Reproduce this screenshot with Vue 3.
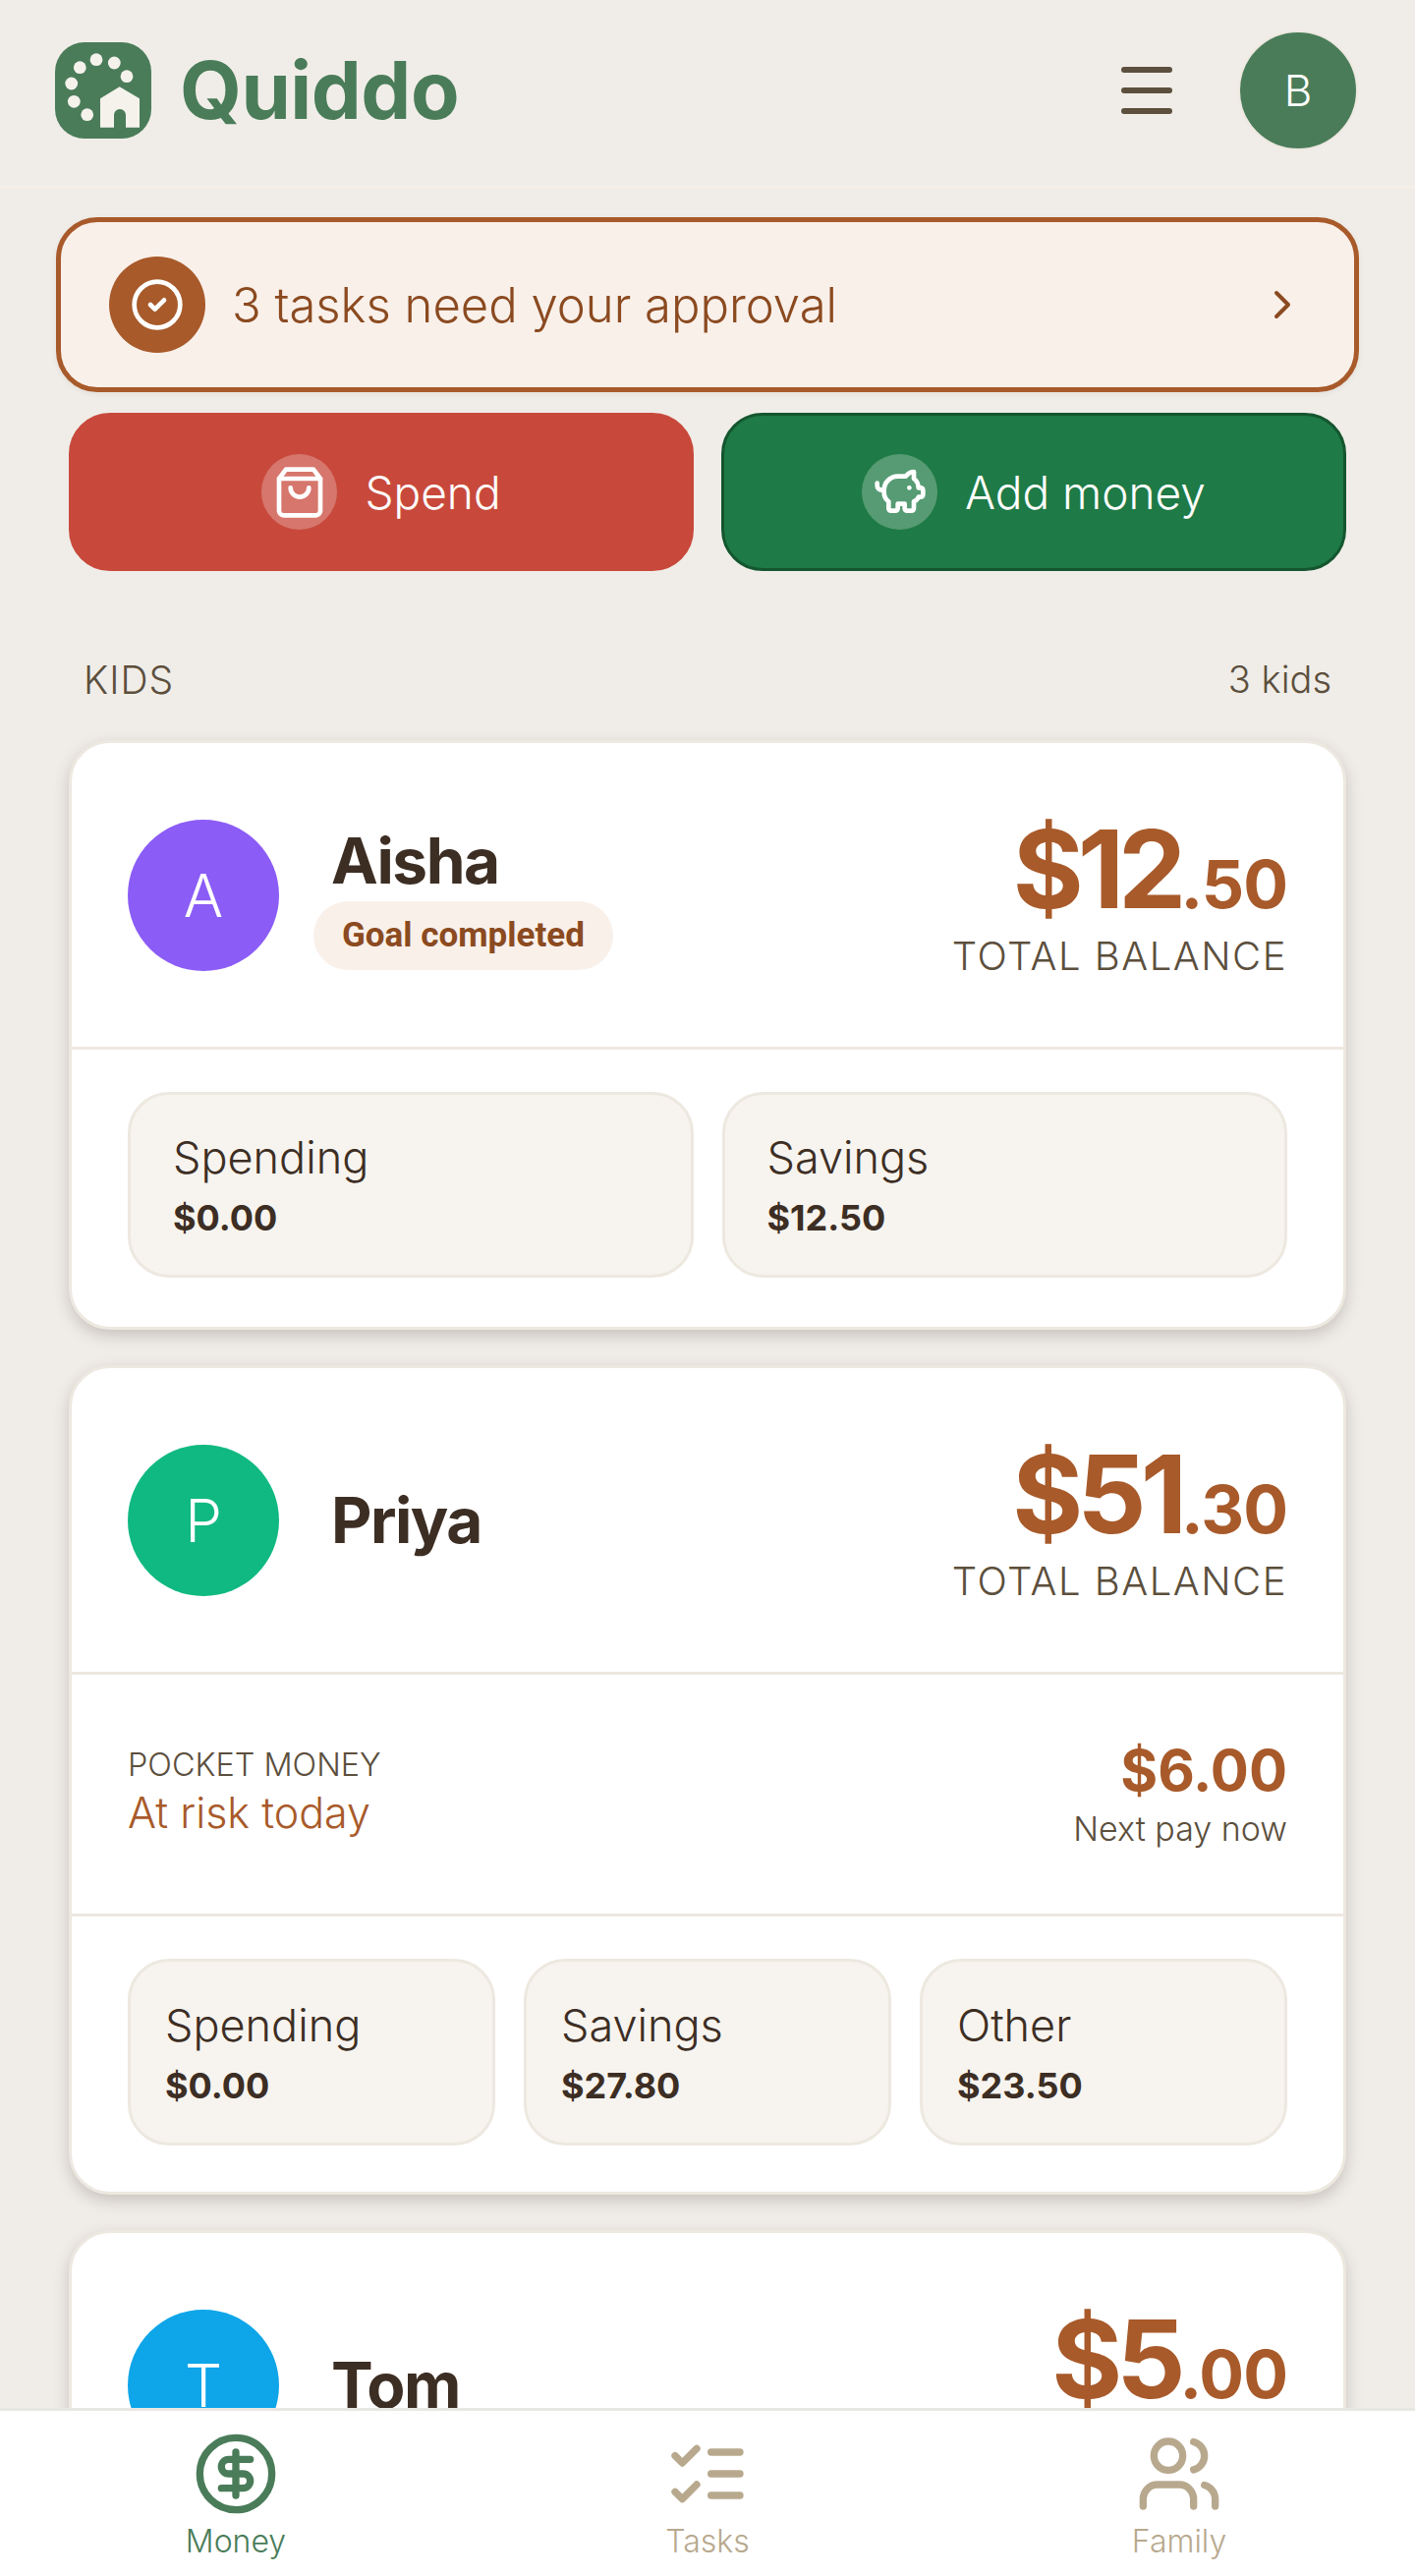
<script setup>
const kids = [
  {
    name: "Aisha",
    initial: "A",
    color: "#8b5cf6",
    badge: "Goal completed",
    whole: "$12",
    cents: ".50",
    pots: [
      { label: "Spending", value: "$0.00" },
      { label: "Savings", value: "$12.50" },
    ],
  },
  {
    name: "Priya",
    initial: "P",
    color: "#10b981",
    whole: "$51",
    cents: ".30",
    pocket: { status: "At risk today", amount: "$6.00", next: "Next pay now" },
    pots: [
      { label: "Spending", value: "$0.00" },
      { label: "Savings", value: "$27.80" },
      { label: "Other", value: "$23.50" },
    ],
  },
  {
    name: "Tom",
    initial: "T",
    color: "#0ea5e9",
    whole: "$5",
    cents: ".00",
    pots: [],
  },
];

const dots = [
  [25.3, 25.7],
  [42, 17.7],
  [60.3, 21],
  [73, 34.7],
  [16.7, 42],
  [19.3, 60.3],
  [32.7, 73.7],
];
</script>

<template>
  <div class="app">
    <header class="topbar">
      <div class="brand">
        <svg class="logo" viewBox="0 0 98 98">
          <rect width="98" height="98" rx="30" fill="#4a7c59" />
          <circle v-for="(d, i) in dots" :key="i" :cx="d[0]" :cy="d[1]" r="6.4" fill="#f5f2ec" />
          <path
            d="M65.7 45.3 86 57.3v29.4H72V74a6 6 0 0 0-12 0v12.7H46V57.3z"
            fill="#f5f2ec"
          />
        </svg>
        <span class="brand-name">Quiddo</span>
      </div>
      <div class="top-actions">
        <div class="burger"><span></span><span></span><span></span></div>
        <div class="me">B</div>
      </div>
    </header>

    <main class="content">
      <div class="approval">
        <div class="approval-icon">
          <svg viewBox="0 0 24 24" class="ico"><circle cx="12" cy="12" r="10" /><path d="m9 12 2 2 4-4" /></svg>
        </div>
        <span class="approval-text">3 tasks need your approval</span>
        <svg viewBox="0 0 24 24" class="ico chevron"><path d="m9 18 6-6-6-6" /></svg>
      </div>

      <div class="actions">
        <button class="action spend">
          <span class="action-icon">
            <svg viewBox="0 0 24 24" class="ico">
              <path d="M6 2 3 6v14a2 2 0 0 0 2 2h14a2 2 0 0 0 2-2V6l-3-4Z" />
              <path d="M3 6h18" />
              <path d="M16 10a4 4 0 0 1-8 0" />
            </svg>
          </span>
          Spend
        </button>
        <button class="action add">
          <span class="action-icon">
            <svg viewBox="0 0 24 24" class="ico">
              <path d="M11 17h3v2a1 1 0 0 0 1 1h2a1 1 0 0 0 1-1v-3a3.16 3.16 0 0 0 2-2h1a1 1 0 0 0 1-1v-2a1 1 0 0 0-1-1h-1a5 5 0 0 0-2-4V3a4 4 0 0 0-3.2 1.6l-.3.4H11a6 6 0 0 0-6 6v1a5 5 0 0 0 2 4v3a1 1 0 0 0 1 1h2a1 1 0 0 0 1-1z" />
              <path d="M16 10h.01" />
              <path d="M2 8v1a2 2 0 0 0 2 2h1" />
            </svg>
          </span>
          Add money
        </button>
      </div>

      <div class="section-head">
        <span class="section-title">KIDS</span>
        <span class="section-count">3 kids</span>
      </div>

      <section v-for="kid in kids" :key="kid.name" class="card">
        <div class="kid-head">
          <div class="kid-avatar" :style="{ background: kid.color }">{{ kid.initial }}</div>
          <div class="kid-info" :class="{ 'has-badge': kid.badge }">
            <div class="kid-name">{{ kid.name }}</div>
            <div v-if="kid.badge" class="badge">{{ kid.badge }}</div>
          </div>
          <div class="balance">
            <div class="balance-amount">{{ kid.whole }}<small>{{ kid.cents }}</small></div>
            <div class="balance-label">TOTAL BALANCE</div>
          </div>
        </div>

        <div v-if="kid.pocket" class="pocket">
          <div>
            <div class="pocket-title">POCKET MONEY</div>
            <div class="pocket-status">{{ kid.pocket.status }}</div>
          </div>
          <div class="pocket-right">
            <div class="pocket-amount">{{ kid.pocket.amount }}</div>
            <div class="pocket-next">{{ kid.pocket.next }}</div>
          </div>
        </div>

        <div v-if="kid.pots.length" class="pots" :class="{ three: kid.pots.length === 3 }">
          <div v-for="pot in kid.pots" :key="pot.label" class="pot">
            <div class="pot-label">{{ pot.label }}</div>
            <div class="pot-value">{{ pot.value }}</div>
          </div>
        </div>
      </section>
    </main>

    <nav class="tabbar">
      <div class="tab active">
        <svg viewBox="0 0 24 24" class="ico">
          <circle cx="12" cy="12" r="10" />
          <path d="M16 8h-6a2 2 0 1 0 0 4h4a2 2 0 1 1 0 4H8" />
          <path d="M12 18V6" />
        </svg>
        <span>Money</span>
      </div>
      <div class="tab">
        <svg viewBox="0 0 24 24" class="ico">
          <path d="m3 17 2 2 4-4" />
          <path d="m3 7 2 2 4-4" />
          <path d="M13 6h8" />
          <path d="M13 12h8" />
          <path d="M13 18h8" />
        </svg>
        <span>Tasks</span>
      </div>
      <div class="tab">
        <svg viewBox="0 0 24 24" class="ico">
          <path d="M16 21v-2a4 4 0 0 0-4-4H6a4 4 0 0 0-4 4v2" />
          <circle cx="9" cy="7" r="4" />
          <path d="M22 21v-2a4 4 0 0 0-3-3.87" />
          <path d="M16 3.13a4 4 0 0 1 0 7.75" />
        </svg>
        <span>Family</span>
      </div>
    </nav>
  </div>
</template>

<style>
html,
body {
  margin: 0;
  background: #f0ede8;
}
</style>

<style scoped>
.app {
  height: 100vh;
  display: flex;
  flex-direction: column;
  overflow: hidden;
  background: #f0ede8;
  font-family: Inter, "Liberation Sans", sans-serif;
  font-weight: 350;
  color: #3d2e24;
}

.ico {
  fill: none;
  stroke: currentColor;
  stroke-width: 2;
  stroke-linecap: round;
  stroke-linejoin: round;
  display: block;
}

.topbar {
  flex: none;
  height: 192px;
  box-sizing: border-box;
  border-bottom: 3px solid #f5efe8;
  padding: 0 58px 6px 56px;
  display: flex;
  align-items: center;
  justify-content: space-between;
}

.brand {
  display: flex;
  align-items: center;
  gap: 29px;
}

.logo {
  width: 98px;
  height: 98px;
  display: block;
}

.brand-name {
  font-size: 81px;
  font-weight: 700;
  color: #4a7c59;
  letter-spacing: -0.5px;
}

.top-actions {
  display: flex;
  align-items: center;
  gap: 67px;
}

.burger {
  width: 52px;
  display: flex;
  flex-direction: column;
  gap: 15px;
}

.burger span {
  height: 6px;
  border-radius: 3px;
  background: #5c4f3d;
}

.me {
  width: 122px;
  height: 122px;
  box-sizing: border-box;
  border-radius: 50%;
  background: #4a7c59;
  border: 2px solid #ede8e0;
  color: #fff;
  font-size: 44px;
  display: flex;
  align-items: center;
  justify-content: center;
}

.content {
  flex: 1;
  min-height: 0;
  overflow: hidden;
  padding: 29px 70px 0;
}

.approval {
  margin: 0 -13px;
  height: 178px;
  box-sizing: border-box;
  border: 5px solid #a85a2a;
  border-radius: 42px;
  background: #f9f0ea;
  padding: 0 49px 0 49px;
  display: flex;
  align-items: center;
  gap: 27px;
  box-shadow: 0 2px 6px rgba(0, 0, 0, 0.06);
}

.approval-icon {
  width: 98px;
  height: 98px;
  border-radius: 50%;
  background: #a85a2a;
  color: #fff;
  display: flex;
  align-items: center;
  justify-content: center;
}

.approval-icon svg {
  width: 56px;
  height: 56px;
}

.approval-text {
  flex: 1;
  font-size: 49px;
  color: #8b4a20;
}

.chevron {
  width: 48px;
  height: 48px;
  color: #8b4a20;
}

.actions {
  margin-top: 21px;
  display: grid;
  grid-template-columns: 1fr 1fr;
  gap: 28px;
}

.action {
  height: 161px;
  box-sizing: border-box;
  border-radius: 42px;
  border: 3px solid transparent;
  color: #fff;
  font: inherit;
  font-size: 46px;
  display: flex;
  align-items: center;
  justify-content: center;
  gap: 28px;
}

.spend {
  background: #c8493b;
  border-color: #c8493b;
}

.add {
  background: #1e7a46;
  border-color: #14562f;
}

.action-icon {
  width: 77px;
  height: 77px;
  border-radius: 50%;
  background: rgba(255, 255, 255, 0.25);
  display: flex;
  align-items: center;
  justify-content: center;
}

.action-icon svg {
  width: 56px;
  height: 56px;
}

.section-head {
  margin-top: 87px;
  padding: 0 15px;
  height: 46px;
  display: flex;
  align-items: center;
  justify-content: space-between;
  color: #5c4f3d;
}

.section-title {
  font-size: 39px;
  letter-spacing: 1px;
}

.section-count {
  font-size: 38px;
}

.card {
  margin-top: 39px;
  background: #fff;
  border: 3px solid #ede8e0;
  border-radius: 42px;
  box-shadow: 0 6px 16px rgba(61, 46, 36, 0.22);
}

.card + .card {
  margin-top: 36px;
}

.kid-head {
  padding: 78px 57px 77px;
  display: flex;
  align-items: center;
}

.kid-avatar {
  flex: none;
  width: 154px;
  height: 154px;
  border-radius: 50%;
  color: #fff;
  font-size: 60px;
  display: flex;
  align-items: center;
  justify-content: center;
}

.kid-info {
  flex: 1;
  padding-left: 35px;
  display: flex;
  flex-direction: column;
  align-items: flex-start;
}

.kid-info.has-badge {
  padding-top: 3px;
}

.kid-name {
  padding-left: 18px;
  font-size: 64px;
  font-weight: 700;
  line-height: 74px;
  letter-spacing: -1.5px;
}

.badge {
  margin-top: 4px;
  height: 70px;
  padding: 0 29px;
  border-radius: 35px;
  background: #f9f0ea;
  color: #8b4a20;
  font-family: Roboto, sans-serif;
  font-size: 35px;
  font-weight: 700;
  line-height: 70px;
}

.balance {
  height: 154px;
  text-align: right;
}

.balance-amount {
  font-size: 110px;
  font-weight: 700;
  line-height: 100px;
  color: #a85a2a;
  letter-spacing: -6px;
}

.balance-amount small {
  font-size: 68px;
  letter-spacing: -1px;
}

.balance-label {
  font-size: 40px;
  line-height: 48px;
  letter-spacing: 1.5px;
  color: #5c4f3d;
}

.pocket {
  border-top: 3px solid #ede8e0;
  height: 243px;
  box-sizing: content-box;
  padding: 0 57px;
  display: flex;
  align-items: center;
  justify-content: space-between;
}

.pocket > div {
  margin-top: -5px;
}

.pocket-title {
  font-size: 32.4px;
  color: #5c4f3d;
}

.pocket-status {
  margin-top: 3px;
  font-size: 43px;
  color: #a85a2a;
}

.pocket-right {
  text-align: right;
}

.pocket-amount {
  font-size: 58px;
  font-weight: 700;
  color: #a85a2a;
}

.pocket-next {
  margin-top: 4px;
  font-size: 34px;
  color: #5c4f3d;
}

.pots {
  border-top: 3px solid #ede8e0;
  padding: 43px 57px 50px;
  display: grid;
  grid-template-columns: repeat(2, 1fr);
  gap: 29px;
}

.pots.three {
  grid-template-columns: repeat(3, 1fr);
  padding-bottom: 47px;
}

.pot {
  height: 189px;
  box-sizing: border-box;
  border: 3px solid #ede8e0;
  border-radius: 42px;
  background: #f7f4ef;
  padding: 0 43px;
  display: flex;
  flex-direction: column;
  justify-content: center;
  gap: 12px;
}

.three .pot {
  height: 190px;
  padding: 0 35px;
}

.pot-label {
  font-size: 45px;
}

.pot-value {
  font-size: 36px;
  font-weight: 700;
}

.tabbar {
  flex: none;
  height: 171px;
  box-sizing: border-box;
  background: #fff;
  border-top: 3px solid #e9e7e3;
  display: grid;
  grid-template-columns: repeat(3, 1fr);
  position: relative;
}

.tab {
  display: flex;
  flex-direction: column;
  align-items: center;
  color: #b8a98e;
  font-size: 32px;
}

.tab.active {
  color: #4a7c59;
}

.tab svg {
  width: 88px;
  height: 88px;
  margin-top: 20px;
  margin-bottom: 5px;
}
</style>
